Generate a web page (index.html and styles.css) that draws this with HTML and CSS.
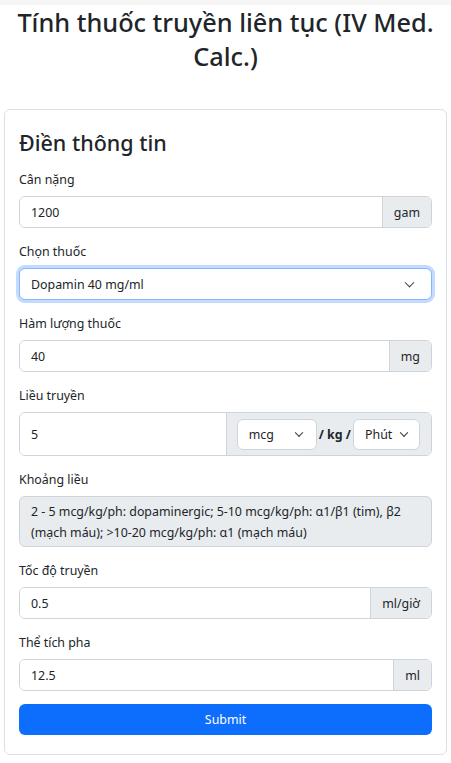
FILE: index.html
```html
<!DOCTYPE html>
<html lang="vi">
<head>
<meta charset="utf-8">
<title>Tính thuốc truyền liên tục</title>
<link rel="stylesheet" href="styles.css">
</head>
<body>
<div class="topbar"></div>
<h1 class="title">Tính thuốc truyền liên tục (IV Med. Calc.)</h1>
<div class="card">
  <h3 class="card-title">Điền thông tin</h3>
  <div class="field">
    <label class="label">Cân nặng</label>
    <div class="group">
      <input class="control" type="text" value="1200">
      <span class="addon">gam</span>
    </div>
  </div>
  <div class="field">
    <label class="label">Chọn thuốc</label>
    <div class="select-wrap focus">
      <select class="select"><option>Dopamin 40 mg/ml</option></select>
    </div>
  </div>
  <div class="field">
    <label class="label">Hàm lượng thuốc</label>
    <div class="group">
      <input class="control" type="text" value="40">
      <span class="addon">mg</span>
    </div>
  </div>
  <div class="field">
    <label class="label">Liều truyền</label>
    <div class="group group-lg">
      <input class="control" type="text" value="5">
      <span class="addon addon-dose">
        <span class="select-wrap mini mcg"><select class="select"><option>mcg</option></select></span>
        <b class="per">/ kg /</b>
        <span class="select-wrap mini phut"><select class="select"><option>Phút</option></select></span>
      </span>
    </div>
  </div>
  <div class="field">
    <label class="label">Khoảng liều</label>
    <div class="readonly">2 - 5 mcg/kg/ph: dopaminergic; 5-10 mcg/kg/ph: α1/β1 (tim), β2 (mạch máu); &gt;10-20 mcg/kg/ph: α1 (mạch máu)</div>
  </div>
  <div class="field">
    <label class="label">Tốc độ truyền</label>
    <div class="group">
      <input class="control" type="text" value="0.5">
      <span class="addon">ml/giờ</span>
    </div>
  </div>
  <div class="field">
    <label class="label">Thể tích pha</label>
    <div class="group">
      <input class="control" type="text" value="12.5">
      <span class="addon">ml</span>
    </div>
  </div>
  <button class="submit" type="button">Submit</button>
</div>
</body>
</html>
```
FILE: styles.css
```css
* { box-sizing: border-box; }
html, body { margin: 0; padding: 0; background: #fff; }
body {
  font-family: "Noto Sans", "Open Sans", sans-serif;
  color: #212529;
  font-size: 12.4px;
  line-height: 21px;
}
.topbar { height: 5px; background: #f6f6f6; }
.title {
  margin: 0 8px 36px;
  font-size: 25.3px;
  line-height: 34px;
  font-weight: 500;
  text-align: center;
  color: #212529;
}
.card {
  margin: 0 4px;
  border: 1px solid #dcdfe3;
  border-radius: 6px;
  padding: 18px 14px 19px;
}
.card-title {
  margin: 0 0 12px;
  font-size: 21.5px;
  line-height: 29px;
  font-weight: 500;
}
.field { margin-bottom: 13px; }
.label { display: block; margin-bottom: 6px; }
.group {
  display: flex;
  height: 32px;
  border: 1px solid #ced4da;
  border-radius: 6px;
  overflow: hidden;
}
.group-lg { height: 44px; }
.control {
  flex: 1;
  min-width: 0;
  border: 0;
  outline: none;
  padding: 0 11px;
  font: inherit;
  color: #212529;
  background: #fff;
}
.addon {
  display: flex;
  align-items: center;
  padding: 0 11px;
  background: #e9ecef;
  border-left: 1px solid #ced4da;
  white-space: nowrap;
}
.addon-dose { padding: 0 11px 0 10px; gap: 1px; }
.per { font-weight: 700; padding: 0 1px; }
.select-wrap {
  position: relative;
  display: block;
  height: 32px;
  border: 1px solid #ced4da;
  border-radius: 6px;
  background: #fff;
}
.select-wrap.focus {
  border-color: #86b7fe;
  box-shadow: 0 0 0 3px rgba(13, 110, 253, 0.25);
}
.select-wrap::after {
  content: "";
  position: absolute;
  right: 18px;
  top: 50%;
  width: 6px;
  height: 6px;
  border-right: 1.5px solid #343a40;
  border-bottom: 1.5px solid #343a40;
  transform: translateY(-70%) rotate(45deg);
  pointer-events: none;
}
.select {
  -webkit-appearance: none;
  appearance: none;
  width: 100%;
  height: 100%;
  border: 0;
  outline: none;
  background: transparent;
  padding: 0 30px 0 11px;
  font: inherit;
  color: #212529;
}
.mini { height: 31px; }
.mini::after { width: 5px; height: 5px; border-width: 1.2px; }
.mcg { width: 80px; }
.mcg::after { right: 14px; }
.phut { width: 67px; }
.phut .select { padding-right: 18px; }
.phut::after { right: 12px; }
.readonly {
  background: #e9ecef;
  border: 1px solid #ced4da;
  border-radius: 6px;
  padding: 4px 11px 3px;
}
.submit {
  display: block;
  width: 100%;
  height: 31px;
  margin-top: 13px;
  border: 0;
  border-radius: 6px;
  background: #0d6efd;
  color: #fff;
  font: inherit;
}
```
